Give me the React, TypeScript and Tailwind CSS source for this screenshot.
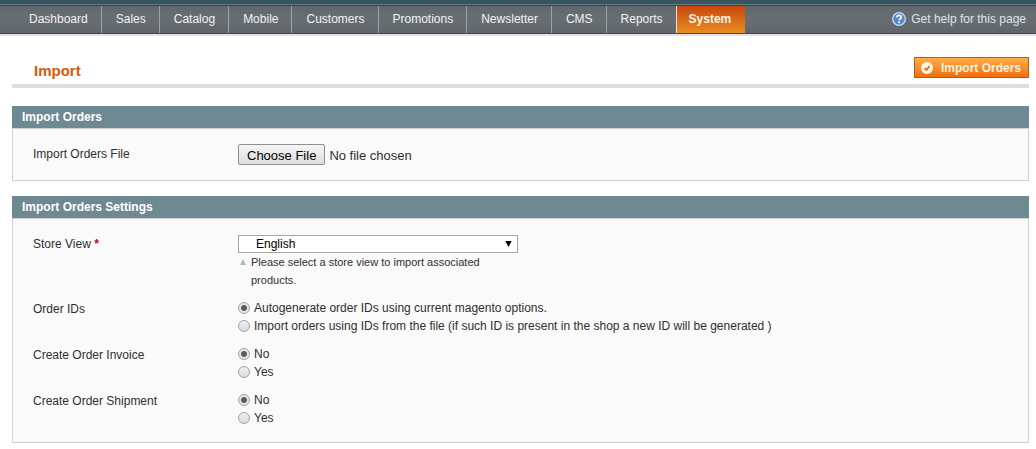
import type { ReactNode } from "react";

const navItems = [
    "Dashboard",
    "Sales",
    "Catalog",
    "Mobile",
    "Customers",
    "Promotions",
    "Newsletter",
    "CMS",
    "Reports",
];

function HelpIcon() {
    return (
        <svg width="14" height="14" viewBox="0 0 14 14" aria-hidden="true">
            <circle cx="7" cy="7" r="6.3" fill="#5b87c6" stroke="#c9dcf3" strokeWidth="1.3" />
            <path
                d="M4.9 5.5C4.9 4.1 5.8 3.4 7 3.4s2.2.8 2.2 1.9c0 1.4-2 1.6-2 3"
                fill="none"
                stroke="#fff"
                strokeWidth="1.6"
            />
            <circle cx="7.1" cy="10.3" r="1" fill="#fff" />
        </svg>
    );
}

function CheckIcon() {
    return (
        <svg width="12" height="12" viewBox="0 0 12 12" aria-hidden="true">
            <circle cx="6" cy="6" r="6" fill="#fff6e6" />
            <path d="M3.6 6.1l1.8 1.9 3.2-4" fill="none" stroke="#d9661a" strokeWidth="1.6" />
        </svg>
    );
}

function Header() {
    return (
        <header className="border-b-2 border-[#e2e3ea]">
            <div className="h-1 bg-[#39545f]" />
            <div className="h-px bg-[#66818b]" />
            <div className="flex h-[29px] items-stretch border-t border-b border-t-[#324650] border-b-[#3f474e] bg-linear-to-b from-[#61686c] via-[#686e72] to-[#5f666a] pr-2.5 pl-[15px] text-[#f2f2f2]">
                <nav className="flex">
                    {navItems.map((item) => (
                        <a
                            key={item}
                            href="#"
                            className="flex items-center border-r border-[#9da3a6] pr-[13px] pb-0.5 pl-3.5 last:border-r-0"
                        >
                            {item}
                        </a>
                    ))}
                </nav>
                <a
                    href="#"
                    aria-current="page"
                    className="flex items-center border-l border-[#e9e4e0] bg-linear-to-b from-[#c8440c] to-[#e88d20] pr-3.5 pb-0.5 pl-3 font-bold text-[#fff6e8]"
                >
                    System
                </a>
                <a href="#" className="ml-auto flex items-center gap-[5px] pb-0.5 text-[#dfe4ee]">
                    <HelpIcon />
                    Get help for this page
                </a>
            </div>
        </header>
    );
}

function Section({ title, children }: { title: string; children: ReactNode }) {
    return (
        <section className="mb-[15px]">
            <h2 className="h-[22px] bg-[#6f8992] px-2.5 leading-[22px] font-bold text-white">{title}</h2>
            <div className="flex flex-col gap-2.5 border border-[#d0d0d0] bg-[#fafafa] px-5 py-[15px]">
                {children}
            </div>
        </section>
    );
}

function RadioRow({ label, name, options }: { label: string; name: string; options: string[] }) {
    return (
        <div role="radiogroup" aria-labelledby={name} className="flex">
            <span id={name} className="w-[205px] shrink-0 pt-px">
                {label}
            </span>
            <div>
                {options.map((option, i) => (
                    <label key={option} className="flex items-center gap-1">
                        <input
                            type="radio"
                            name={name}
                            defaultChecked={i === 0}
                            className="size-3 shrink-0 appearance-none rounded-full border border-[#a3a3a3] bg-linear-to-b from-[#eeeeee] to-[#dcdcdc] checked:bg-[radial-gradient(circle,#5c5c5c_0,#5c5c5c_2.5px,#e6e6e6_3.5px)]"
                        />
                        {option}
                    </label>
                ))}
            </div>
        </div>
    );
}

export default function App() {
    return (
        <div className="bg-white font-['Liberation_Sans',Arial,sans-serif] text-xs leading-[18px] text-[#2f2f2f]">
            <Header />
            <main className="pr-[7px] pl-3">
                <div className="mb-[18px] flex items-end justify-between border-b-4 border-[#dfdfdf] pt-[21px] pb-1">
                    <h1 className="pl-[22px] text-[15px] font-bold text-[#d85909]">Import</h1>
                    <button
                        type="button"
                        className="mb-0.5 flex h-[21px] items-center gap-2 border border-[#a8601c] bg-linear-to-b from-[#ffac47] to-[#f46c05] pr-[7px] pl-1.5 font-bold text-[#fff3df]"
                    >
                        <CheckIcon />
                        Import Orders
                    </button>
                </div>

                <Section title="Import Orders">
                    <div className="flex">
                        <label htmlFor="orders-file" className="w-[205px] shrink-0 pt-px">
                            Import Orders File
                        </label>
                        <input
                            id="orders-file"
                            type="file"
                            className="h-[21px] text-[13px] leading-[21px] file:h-[21px] file:rounded-xs file:border file:border-solid file:border-[#8e8e8e] file:bg-linear-to-b file:from-[#f6f6f6] file:to-[#dddddd] file:px-2 file:text-black"
                        />
                    </div>
                </Section>

                <Section title="Import Orders Settings">
                    <div className="flex pt-px">
                        <label htmlFor="store-view" className="w-[205px] shrink-0">
                            Store View <span className="font-bold text-[#b8100c]">*</span>
                        </label>
                        <div className="w-[280px]">
                            <div className="relative">
                                <select
                                    id="store-view"
                                    className="block h-[18px] w-full appearance-none border border-[#a6a6a6] bg-white pl-[17px] leading-4 text-black"
                                >
                                    <option>English</option>
                                </select>
                                <svg
                                    className="pointer-events-none absolute top-1.5 right-1.5"
                                    width="7"
                                    height="6"
                                    viewBox="0 0 7 6"
                                    aria-hidden="true"
                                >
                                    <path d="M0.3 0h6.4L3.5 6z" fill="#000" />
                                </svg>
                            </div>
                            <div className="flex gap-[5px] pl-0.5 text-[11px]">
                                <svg className="mt-1.5 shrink-0" width="6" height="6" viewBox="0 0 6 6" aria-hidden="true">
                                    <path d="M3 0l3 6H0z" fill="#a5bcc6" />
                                </svg>
                                <p className="max-w-[240px]">Please select a store view to import associated products.</p>
                            </div>
                        </div>
                    </div>
                    <RadioRow
                        label="Order IDs"
                        name="order-ids"
                        options={[
                            "Autogenerate order IDs using current magento options.",
                            "Import orders using IDs from the file (if such ID is present in the shop a new ID will be generated )",
                        ]}
                    />
                    <RadioRow label="Create Order Invoice" name="create-invoice" options={["No", "Yes"]} />
                    <RadioRow label="Create Order Shipment" name="create-shipment" options={["No", "Yes"]} />
                </Section>
            </main>
        </div>
    );
}
